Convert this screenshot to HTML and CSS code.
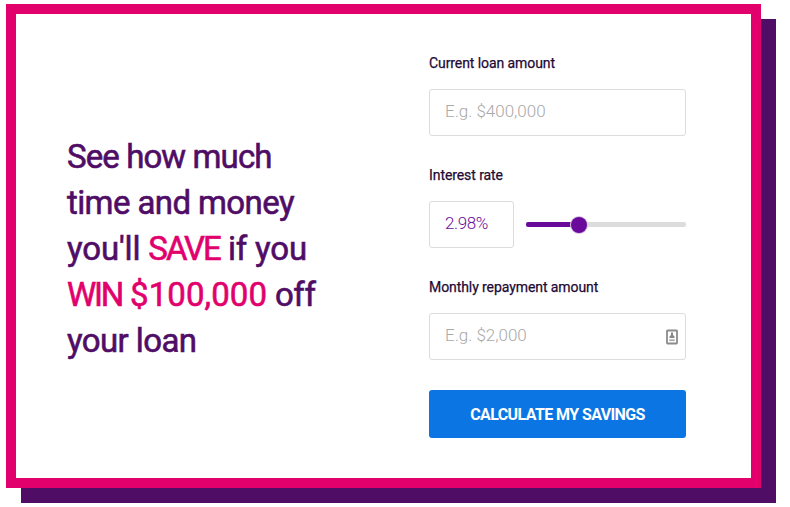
FILE: index.html
```
<!DOCTYPE html>
<html lang="en">
<head>
    <meta charset="UTF-8">
    <meta name="viewport" content="width=device-width, initial-scale=1.0">
    <title>Loan Savings Calculator</title>
    <link rel="stylesheet" href="styles.css">
</head>
<body>

<div class="container">
    <h1 class="heading">
        <span class="line l1">See how much</span>
        <span class="line l2">time and money</span>
        <span class="line l3">you'll <span class="pink save">SAVE</span> if you</span>
        <span class="line l4"><span class="pink"><span class="win">WIN</span> <span class="prize">$100,000</span></span> off</span>
        <span class="line l5">your loan</span>
    </h1>

    <form class="calculator">
        <label for="loan">Current loan amount</label>
        <input type="text" class="field" id="loan" placeholder="E.g. $400,000">

        <label for="rate">Interest rate</label>
        <div class="rate">
            <input type="text" class="field rate-field" id="rate" value="2.98%">
            <input type="range" class="slider" min="0" max="1000" value="311" aria-label="Interest rate">
        </div>

        <label for="repayment">Monthly repayment amount</label>
        <div class="field repayment">
            <input type="text" id="repayment" placeholder="E.g. $2,000">
            <svg class="autofill" width="12" height="16" viewBox="0 0 12 16">
                <rect x="1" y="1.5" width="10" height="13" rx="0.5" fill="#fff" stroke="#8c8c8c" stroke-width="1.8"/>
                <path d="M5 3.5H7V6L8.5 7.5V9H3.5V7.5L5 6Z" fill="#888"/>
                <path d="M3.3 11.2H8.7" stroke="#aaa" stroke-width="1.8"/>
            </svg>
        </div>

        <button type="button">CALCULATE MY SAVINGS</button>
    </form>
</div>

</body>
</html>
```

FILE: styles.css
```
* {
    box-sizing: border-box;
}
body {
    font-family: Roboto, Arial, sans-serif;
    background-color: #fff;
    min-height: 507px;
    margin: 0;
    padding: 4px 0 0 6px;
}
.container {
    display: flex;
    width: 755px;
    height: 484px;
    padding: 39px 65px 0 51px;
    background-color: #fff;
    border: 10px solid #e1006c;
    box-shadow: 15px 15px 0 #500d66;
}
.heading {
    width: 362px;
    margin: 81px 0 0;
    color: #500d66;
    font-size: 33px;
    font-weight: 400;
    line-height: 46px;
    -webkit-text-stroke: 0.6px;
}
.line {
    display: block;
    white-space: nowrap;
}
.l1 {
    letter-spacing: -0.9px;
}
.l2 {
    letter-spacing: -0.6px;
}
.l3 {
    letter-spacing: -0.15px;
}
.l4 {
    letter-spacing: -0.4px;
}
.l5 {
    letter-spacing: -0.6px;
}
.pink {
    color: #e1006c;
}
.save {
    letter-spacing: -2px;
}
.win {
    letter-spacing: -2.2px;
}
.prize {
    letter-spacing: 0.1px;
}
.calculator {
    display: flex;
    flex-direction: column;
    width: 257px;
}
label {
    height: 20px;
    margin-bottom: 16px;
    color: #220a35;
    font-size: 14px;
    font-weight: 400;
    letter-spacing: -0.08px;
    line-height: 20px;
    white-space: nowrap;
    -webkit-text-stroke: 0.25px;
}
input {
    font-family: inherit;
}
.field {
    width: 100%;
    height: 47px;
    margin-bottom: 29px;
    padding: 0 15px 4px;
    background-color: #fff;
    border: 1px solid #dcdcdc;
    border-radius: 3px;
    color: #6a0a9a;
    font-size: 17px;
    font-weight: 300;
}
input::placeholder {
    color: #a9a9a9;
    opacity: 1;
}
.rate {
    display: flex;
    gap: 12px;
}
.rate-field {
    width: 85px;
    letter-spacing: -0.4px;
}
.slider {
    -webkit-appearance: none;
    appearance: none;
    width: 160px;
    height: 5px;
    margin: 21px 0 0;
    background: linear-gradient(to right, #6a0a9a 33%, #dcdcdc 33%);
    border-radius: 2px;
}
.slider::-webkit-slider-thumb {
    -webkit-appearance: none;
    width: 16px;
    height: 16px;
    background-color: #6a0a9a;
    border-radius: 50%;
    box-shadow: 0 0 0 1px #d9c2e4;
}
.repayment {
    display: flex;
    align-items: center;
    justify-content: space-between;
    padding: 0 7px 0 15px;
    margin-bottom: 30px;
}
.repayment input {
    width: 180px;
    padding: 0 0 4px;
    border: none;
    outline: none;
    font-size: 17px;
    font-weight: 300;
}
button {
    height: 48px;
    background-color: #0b76e3;
    border: none;
    border-radius: 3px;
    color: #fff;
    font-family: inherit;
    font-size: 16px;
    font-weight: 700;
    letter-spacing: -0.6px;
    cursor: pointer;
}
```
